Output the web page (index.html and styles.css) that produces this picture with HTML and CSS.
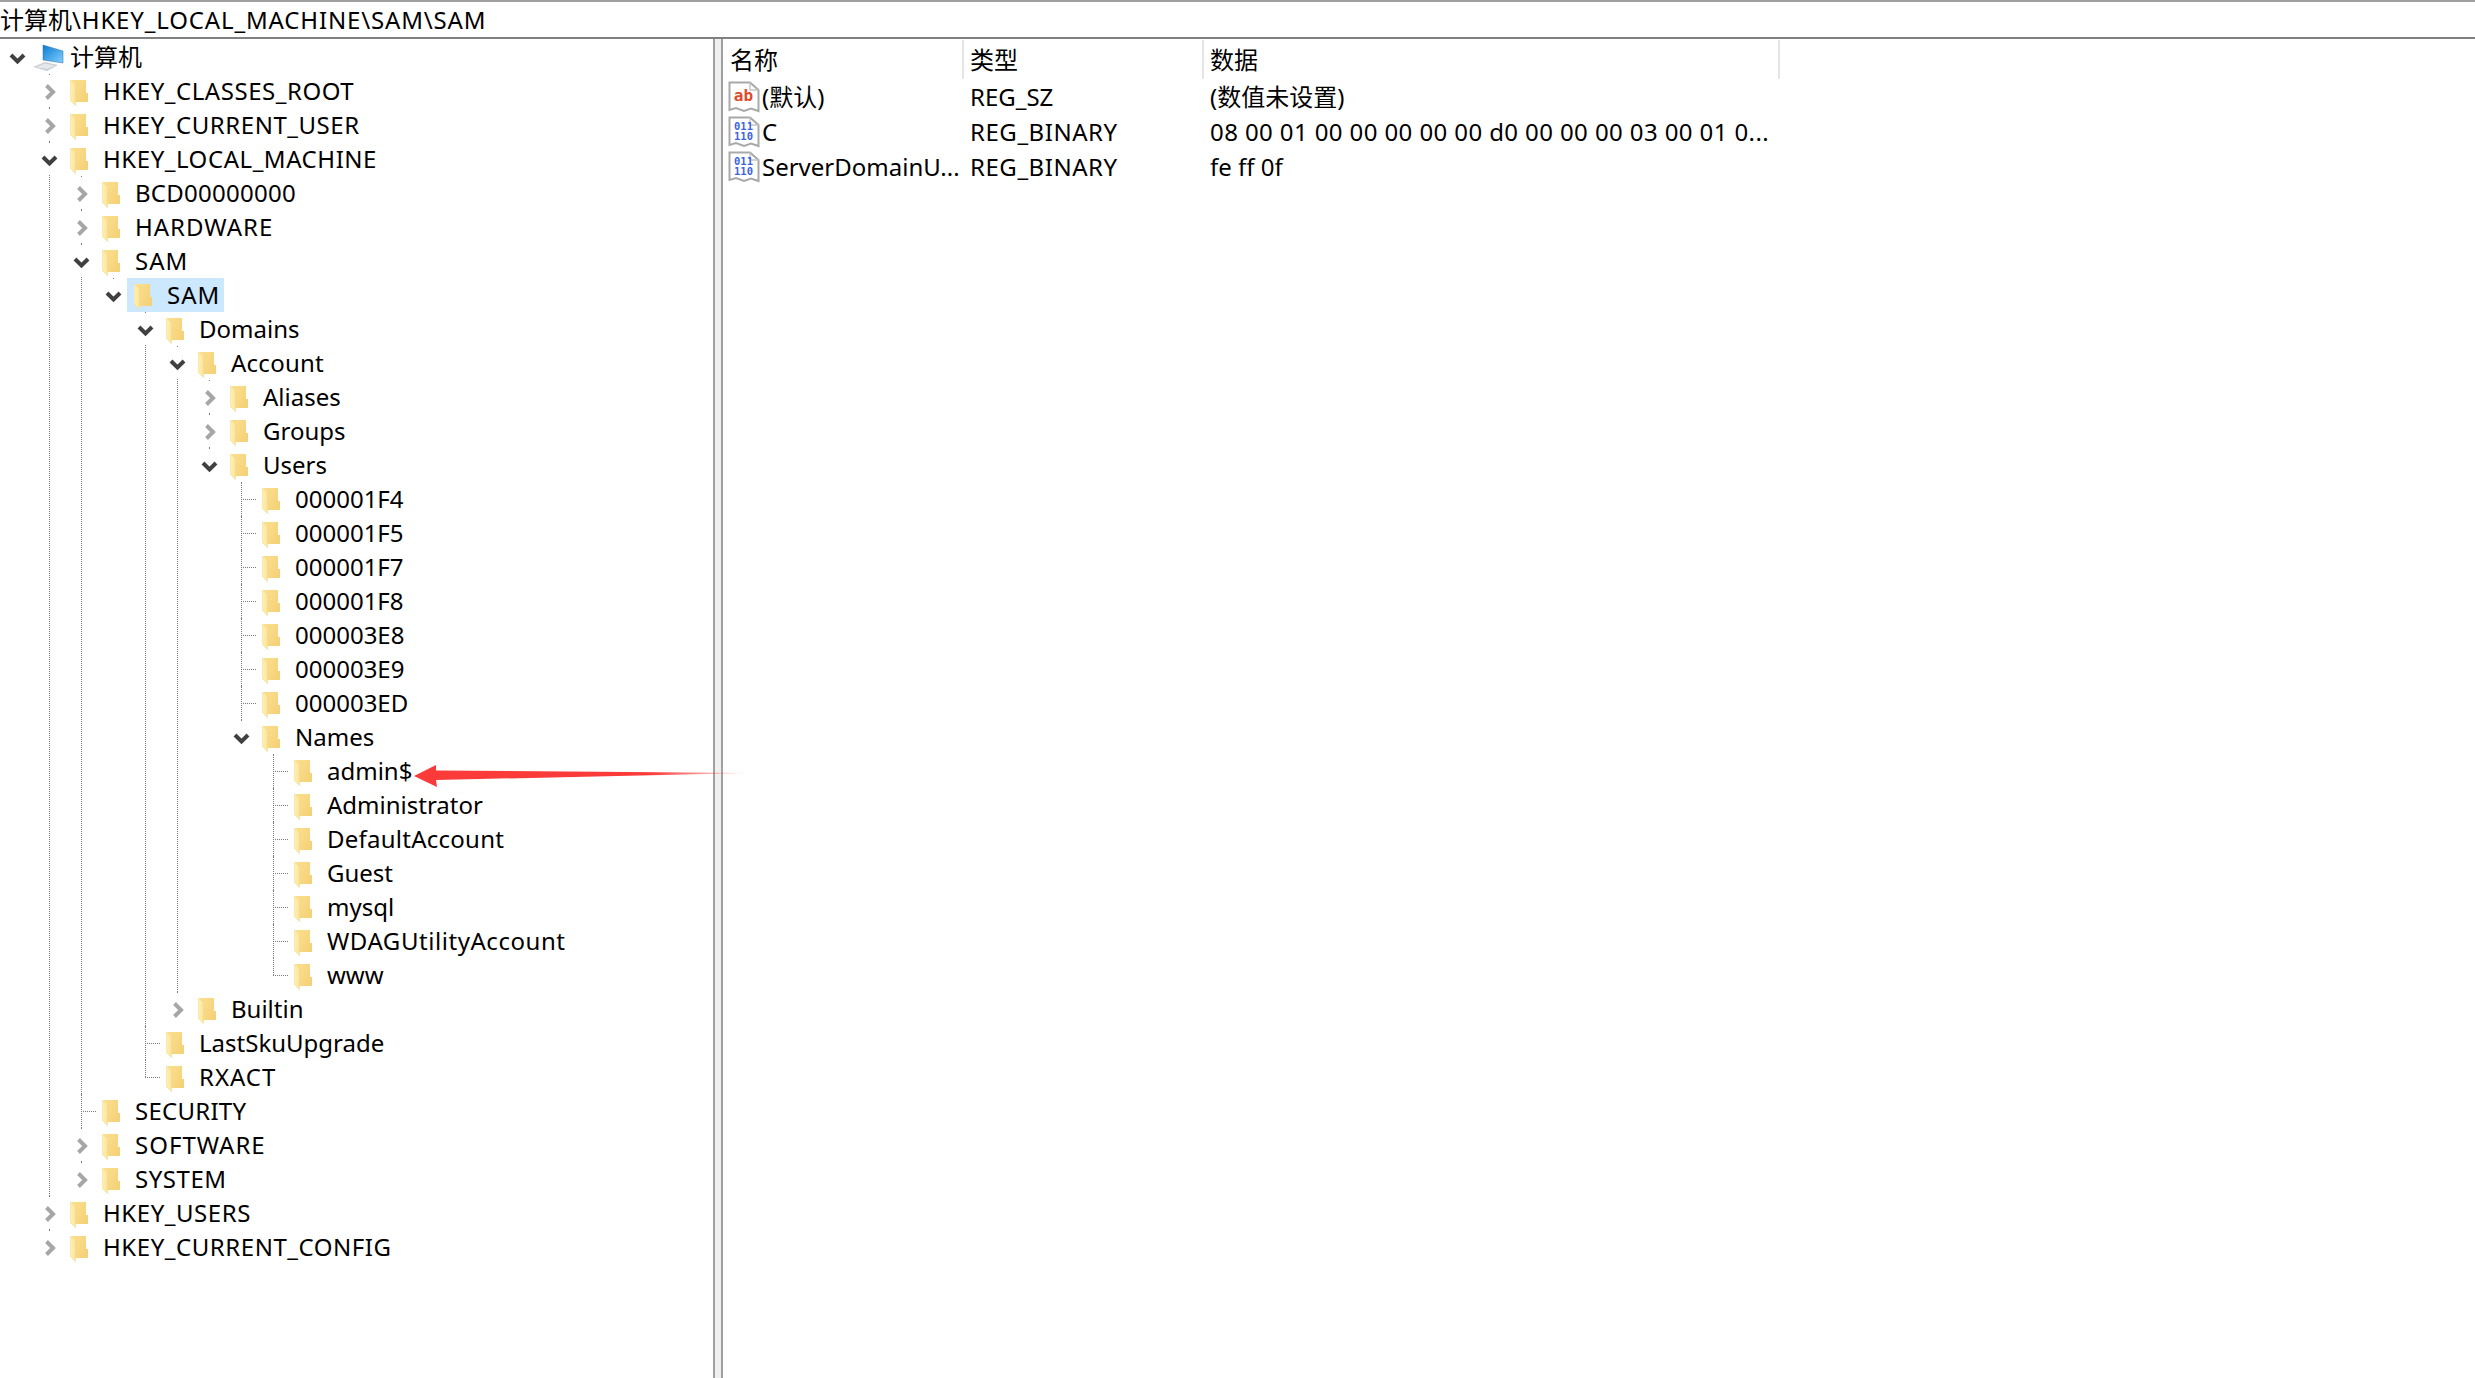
FILE: index.html
```html
<!DOCTYPE html>
<html lang="zh">
<head>
<meta charset="utf-8">
<title>注册表编辑器</title>
<link rel="stylesheet" href="styles.css">
</head>
<body>
<svg class="sprite" aria-hidden="true">
  <defs>
    <linearGradient id="gBack" x1="0" y1="0" x2="1" y2="0.6"><stop offset="0" stop-color="#fbe08f"/><stop offset="1" stop-color="#f5d27a"/></linearGradient>
    <linearGradient id="gFront" x1="0" y1="0" x2="1" y2="0"><stop offset="0" stop-color="#fff0b8"/><stop offset="1" stop-color="#fde596"/></linearGradient>
    <linearGradient id="gScreen" x1="0" y1="0" x2="1" y2="1"><stop offset="0" stop-color="#0b7bd0"/><stop offset="1" stop-color="#7fd0ff"/></linearGradient>
    <linearGradient id="gArrow" x1="0" y1="0" x2="1" y2="0"><stop offset="0" stop-color="#fb3a3a"/><stop offset="0.7" stop-color="#fb3a3a"/><stop offset="1" stop-color="#fb3a3a" stop-opacity="0.1"/></linearGradient>
    <symbol id="folder" viewBox="0 0 18 27">
      <path d="M1 1H16V14H18V23H5V6Z" fill="url(#gBack)"/>
      <path d="M0 1L5.500 5V26.500L0 21Z" fill="url(#gFront)" stroke="#f3d98f" stroke-width=".6"/>
    </symbol>
    <symbol id="right" viewBox="0 0 32 32">
      <path d="M13.500 10.500L20 17L13.500 23.500" fill="none" stroke="#a6a6a6" stroke-width="4"/>
    </symbol>
    <symbol id="down" viewBox="0 0 32 32">
      <path d="M10 14L16.500 20.500L23 14" fill="none" stroke="#404040" stroke-width="4"/>
    </symbol>
    <symbol id="page" viewBox="0 0 32 32">
      <path d="M1.500 1.500H22L30.500 9V30L23 27.500L16 30L8 27L1.500 29Z" fill="#fff" stroke="#a9a9a9" stroke-width="2"/>
      <path d="M22 1.500V9H30.500" fill="none" stroke="#c4c4c4" stroke-width="1.400"/>
    </symbol>
  </defs>
</svg>

<div class="address">计算机<span class="caps-addr">\HKEY_LOCAL_MACHINE\SAM\SAM</span></div>

<main class="split">
  <nav class="tree-pane">
    <ul class="tree">
      <li class="root">
        <div class="row"><span class="twist"><svg class="chev"><use href="#down"/></svg></span>
          <svg class="computer" viewBox="0 0 32 30"><path d="M10 3L30 9V21L10 18Z" fill="url(#gScreen)" stroke="#2f6fa8" stroke-width=".5"/><path d="M0 25L12 20L25 23L14 29Z" fill="#c9ced3"/><path d="M3 25L12 21.500L22 23.500L14 27Z" fill="#e6e9ec"/></svg>
          <span class="label root-label">计算机</span></div>
        <ul>
          <li><div class="row"><span class="twist"><svg class="chev"><use href="#right"/></svg></span><span class="item"><svg class="folder"><use href="#folder"/></svg><span class="label caps">HKEY_CLASSES_ROOT</span></span></div></li>
          <li><div class="row"><span class="twist"><svg class="chev"><use href="#right"/></svg></span><span class="item"><svg class="folder"><use href="#folder"/></svg><span class="label caps">HKEY_CURRENT_USER</span></span></div></li>
          <li><div class="row"><span class="twist"><svg class="chev"><use href="#down"/></svg></span><span class="item"><svg class="folder"><use href="#folder"/></svg><span class="label caps">HKEY_LOCAL_MACHINE</span></span></div>
            <ul>
              <li><div class="row"><span class="twist"><svg class="chev"><use href="#right"/></svg></span><span class="item"><svg class="folder"><use href="#folder"/></svg><span class="label tight">BCD00000000</span></span></div></li>
              <li><div class="row"><span class="twist"><svg class="chev"><use href="#right"/></svg></span><span class="item"><svg class="folder"><use href="#folder"/></svg><span class="label wide">HARDWARE</span></span></div></li>
              <li><div class="row"><span class="twist"><svg class="chev"><use href="#down"/></svg></span><span class="item"><svg class="folder"><use href="#folder"/></svg><span class="label wide">SAM</span></span></div>
                <ul>
                  <li><div class="row"><span class="twist"><svg class="chev"><use href="#down"/></svg></span><span class="item selected"><svg class="folder"><use href="#folder"/></svg><span class="label wide">SAM</span></span></div>
                    <ul>
                      <li><div class="row"><span class="twist"><svg class="chev"><use href="#down"/></svg></span><span class="item"><svg class="folder"><use href="#folder"/></svg><span class="label">Domains</span></span></div>
                        <ul>
                          <li><div class="row"><span class="twist"><svg class="chev"><use href="#down"/></svg></span><span class="item"><svg class="folder"><use href="#folder"/></svg><span class="label tight">Account</span></span></div>
                            <ul>
                              <li><div class="row"><span class="twist"><svg class="chev"><use href="#right"/></svg></span><span class="item"><svg class="folder"><use href="#folder"/></svg><span class="label">Aliases</span></span></div></li>
                              <li><div class="row"><span class="twist"><svg class="chev"><use href="#right"/></svg></span><span class="item"><svg class="folder"><use href="#folder"/></svg><span class="label">Groups</span></span></div></li>
                              <li><div class="row"><span class="twist"><svg class="chev"><use href="#down"/></svg></span><span class="item"><svg class="folder"><use href="#folder"/></svg><span class="label">Users</span></span></div>
                                <ul>
                                  <li><div class="row"><span class="twist leaf"></span><span class="item"><svg class="folder"><use href="#folder"/></svg><span class="label">000001F4</span></span></div></li>
                                  <li><div class="row"><span class="twist leaf"></span><span class="item"><svg class="folder"><use href="#folder"/></svg><span class="label">000001F5</span></span></div></li>
                                  <li><div class="row"><span class="twist leaf"></span><span class="item"><svg class="folder"><use href="#folder"/></svg><span class="label">000001F7</span></span></div></li>
                                  <li><div class="row"><span class="twist leaf"></span><span class="item"><svg class="folder"><use href="#folder"/></svg><span class="label">000001F8</span></span></div></li>
                                  <li><div class="row"><span class="twist leaf"></span><span class="item"><svg class="folder"><use href="#folder"/></svg><span class="label">000003E8</span></span></div></li>
                                  <li><div class="row"><span class="twist leaf"></span><span class="item"><svg class="folder"><use href="#folder"/></svg><span class="label">000003E9</span></span></div></li>
                                  <li><div class="row"><span class="twist leaf"></span><span class="item"><svg class="folder"><use href="#folder"/></svg><span class="label">000003ED</span></span></div></li>
                                  <li><div class="row"><span class="twist"><svg class="chev"><use href="#down"/></svg></span><span class="item"><svg class="folder"><use href="#folder"/></svg><span class="label">Names</span></span></div>
                                    <ul>
                                      <li><div class="row"><span class="twist leaf"></span><span class="item"><svg class="folder"><use href="#folder"/></svg><span class="label">admin$</span></span></div></li>
                                      <li><div class="row"><span class="twist leaf"></span><span class="item"><svg class="folder"><use href="#folder"/></svg><span class="label">Administrator</span></span></div></li>
                                      <li><div class="row"><span class="twist leaf"></span><span class="item"><svg class="folder"><use href="#folder"/></svg><span class="label tight">DefaultAccount</span></span></div></li>
                                      <li><div class="row"><span class="twist leaf"></span><span class="item"><svg class="folder"><use href="#folder"/></svg><span class="label">Guest</span></span></div></li>
                                      <li><div class="row"><span class="twist leaf"></span><span class="item"><svg class="folder"><use href="#folder"/></svg><span class="label">mysql</span></span></div></li>
                                      <li><div class="row"><span class="twist leaf"></span><span class="item"><svg class="folder"><use href="#folder"/></svg><span class="label caps">WDAGUtilityAccount</span></span></div></li>
                                      <li><div class="row"><span class="twist leaf"></span><span class="item"><svg class="folder"><use href="#folder"/></svg><span class="label">www</span></span></div></li>
                                    </ul>
                                  </li>
                                </ul>
                              </li>
                            </ul>
                          </li>
                          <li><div class="row"><span class="twist"><svg class="chev"><use href="#right"/></svg></span><span class="item"><svg class="folder"><use href="#folder"/></svg><span class="label">Builtin</span></span></div></li>
                        </ul>
                      </li>
                      <li><div class="row"><span class="twist leaf"></span><span class="item"><svg class="folder"><use href="#folder"/></svg><span class="label">LastSkuUpgrade</span></span></div></li>
                      <li><div class="row"><span class="twist leaf"></span><span class="item"><svg class="folder"><use href="#folder"/></svg><span class="label wide">RXACT</span></span></div></li>
                    </ul>
                  </li>
                </ul>
              </li>
              <li><div class="row"><span class="twist leaf"></span><span class="item"><svg class="folder"><use href="#folder"/></svg><span class="label tight">SECURITY</span></span></div></li>
              <li><div class="row"><span class="twist"><svg class="chev"><use href="#right"/></svg></span><span class="item"><svg class="folder"><use href="#folder"/></svg><span class="label wide">SOFTWARE</span></span></div></li>
              <li><div class="row"><span class="twist"><svg class="chev"><use href="#right"/></svg></span><span class="item"><svg class="folder"><use href="#folder"/></svg><span class="label caps">SYSTEM</span></span></div></li>
            </ul>
          </li>
          <li><div class="row"><span class="twist"><svg class="chev"><use href="#right"/></svg></span><span class="item"><svg class="folder"><use href="#folder"/></svg><span class="label caps">HKEY_USERS</span></span></div></li>
          <li><div class="row"><span class="twist"><svg class="chev"><use href="#right"/></svg></span><span class="item"><svg class="folder"><use href="#folder"/></svg><span class="label caps">HKEY_CURRENT_CONFIG</span></span></div></li>
        </ul>
      </li>
    </ul>
  </nav>

  <div class="splitter"></div>

  <section class="values">
    <div class="vrow head">
      <div class="cell name-head">名称</div>
      <div class="cell">类型</div>
      <div class="cell">数据</div>
    </div>
    <div class="vrow">
      <div class="cell name"><svg class="vicon" viewBox="0 0 32 32"><use href="#page"/><text class="ab" x="15.500" y="20">ab</text></svg><span>(默认)</span></div>
      <div class="cell">REG_SZ</div>
      <div class="cell">(数值未设置)</div>
    </div>
    <div class="vrow">
      <div class="cell name"><svg class="vicon" viewBox="0 0 32 32"><use href="#page"/><text class="bin" x="15.500" y="14">011</text><text class="bin" x="15.500" y="24">110</text></svg><span>C</span></div>
      <div class="cell caps">REG_BINARY</div>
      <div class="cell hex">08 00 01 00 00 00 00 00 d0 00 00 00 03 00 01 0...</div>
    </div>
    <div class="vrow">
      <div class="cell name"><svg class="vicon" viewBox="0 0 32 32"><use href="#page"/><text class="bin" x="15.500" y="14">011</text><text class="bin" x="15.500" y="24">110</text></svg><span>ServerDomainU...</span></div>
      <div class="cell caps">REG_BINARY</div>
      <div class="cell">fe ff 0f</div>
    </div>
  </section>

  <svg class="arrow" viewBox="0 0 336 22" aria-hidden="true"><path d="M0 11L22 0L22 5.500L336 8L22 15L23 22Z" fill="url(#gArrow)"/></svg>
</main>
</body>
</html>
```

FILE: styles.css
```css
* { box-sizing: border-box; }
html, body { height: 100%; }
body {
  margin: 0;
  height: 1378px;
  overflow: hidden;
  display: flex;
  flex-direction: column;
  background: #fff;
  color: #000;
  font-family: "Noto Sans", "Noto Sans CJK SC", sans-serif;
  font-size: 24px;
}
.sprite { display: block; width: 0; height: 0; }
.address {
  height: 39px;
  border-top: 2px solid #a0a0a0;
  border-bottom: 2px solid #808080;
  line-height: 35px;
  white-space: nowrap;
}
.caps-addr { letter-spacing: .85px; }
.split { position: relative; flex: 1; display: flex; min-height: 0; }

/* width tuning for capitals */
.tight { letter-spacing: .25px; }
.caps { letter-spacing: .55px; }
.wide { letter-spacing: 1px; }
.hex { letter-spacing: .4px; }

/* tree */
.tree-pane { width: 713px; flex: none; padding: 1px 0 0 1px; overflow: hidden; }
.tree-pane ul { list-style: none; margin: 0; padding: 0 0 0 32px; }
.tree-pane .tree { padding: 0; }
.tree-pane li { position: relative; }
.tree-pane li:not(.root)::before {
  content: "";
  position: absolute;
  left: 16px;
  top: 0;
  bottom: 0;
  border-left: 1px dotted #7a7a7a;
}
.tree-pane li:not(.root):last-child::before { bottom: auto; height: 17px; }
.row { position: relative; display: flex; align-items: center; height: 34px; white-space: nowrap; }
.twist { position: relative; flex: none; width: 32px; height: 32px; background: #fff; }
.twist.leaf { background: none; }
.twist.leaf::after {
  content: "";
  position: absolute;
  left: 16px;
  top: 16px;
  width: 15px;
  border-top: 1px dotted #7a7a7a;
}
.chev { display: block; width: 32px; height: 32px; }
.computer { flex: none; width: 32px; height: 30px; }
.item { display: flex; align-items: center; height: 34px; margin-left: -2px; padding: 0 4px 0 7px; }
.item.selected { position: relative; z-index: 1; background: #cce8ff; }
.folder { flex: none; width: 18px; height: 27px; margin-top: 2px; }
.label { margin-left: 15px; line-height: 34px; }
.root-label { margin-left: 5px; }

/* splitter */
.splitter {
  flex: none;
  width: 10px;
  background: #f0f0f0;
  border-left: 2px solid #a0a0a0;
  border-right: 2px solid #a0a0a0;
}

/* values */
.values { flex: 1; min-width: 0; padding-top: 1px; }
.vrow { display: grid; grid-template-columns: 241px 240px 576px; height: 35px; align-items: center; }
.vrow.head { height: 38px; margin-bottom: 1px; align-items: stretch; }
.cell { padding-left: 6px; line-height: 35px; white-space: nowrap; }
.head .cell { border-right: 2px solid #e5e5e5; padding-top: 1px; line-height: 38px; }
.cell.name-head { padding-left: 7px; }
.cell.name { display: flex; align-items: center; padding-left: 5px; }
.vicon { flex: none; width: 32px; height: 32px; margin-right: 2px; }
.ab { font: bold 16px "DejaVu Sans Mono", monospace; fill: #e0492a; text-anchor: middle; }
.bin { font: bold 10.500px "DejaVu Sans Mono", monospace; fill: #3c63e0; text-anchor: middle; }

/* annotation arrow */
.arrow { position: absolute; left: 414px; top: 726px; width: 336px; height: 22px; }
```
